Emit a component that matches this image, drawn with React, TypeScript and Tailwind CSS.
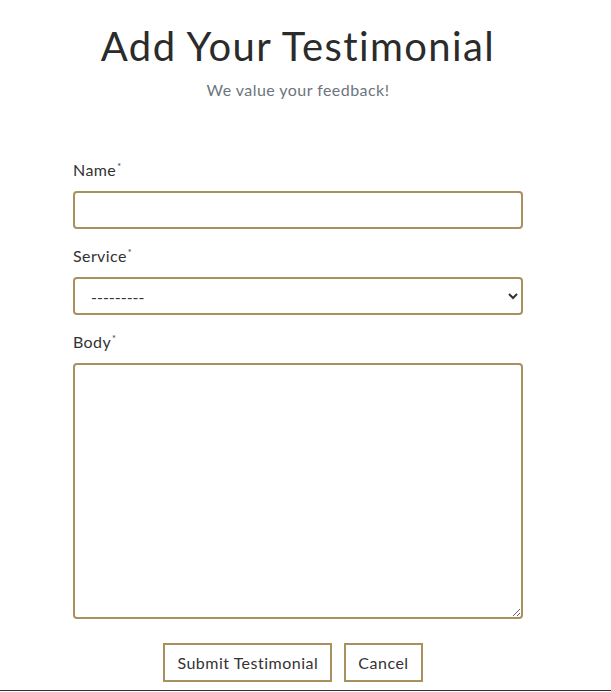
import React from 'react';

const Label = ({ text }: { text: string }) => (
  <label className="block text-[16px] leading-[24px] text-[#333] tracking-[0.4px]">
    {text}
    <span className="inline-block text-[9px] leading-[9px] relative top-[-6px] ml-[1px]">*</span>
  </label>
);

export default function App() {
  return (
    <div className="w-[611px] bg-white" style={{ fontFamily: 'Lato, "Open Sans", sans-serif' }}>
      <div className="w-[596px] pt-[22px]">
        <h1 className="text-center text-[40px] leading-[48px] font-normal text-[#2b2b2b] tracking-[1.4px]">
          Add Your Testimonial
        </h1>
        <p className="text-center text-[16px] leading-[24px] text-[#6c757d] mt-[8px] tracking-[0.45px]">We value your feedback!</p>

        <form className="w-[450px] mx-auto mt-[56px]" onSubmit={e => e.preventDefault()}>
          <div className="mb-[15px]">
            <Label text="Name" />
            <input type="text" className="mt-[9px] block w-full h-[38px] border-2 border-[#a8915f] rounded-[4px] px-3 outline-none" />
          </div>
          <div className="mb-[15px]">
            <Label text="Service" />
            <select className="mt-[9px] block w-full h-[38px] border-2 border-[#a8915f] rounded-[4px] px-3 text-[16px] text-[#333] bg-white outline-none">
              <option>---------</option>
            </select>
          </div>
          <div>
            <Label text="Body" />
            <textarea className="mt-[9px] block w-full h-[256px] border-2 border-[#a8915f] rounded-[4px] px-3 py-2 outline-none" />
          </div>
          <div className="flex justify-center gap-[12px] mt-[24px] pb-[8px] pr-[10px]">
            <button type="submit" className="h-[39px] px-[12px] border-2 border-[#a8915f] text-[16px] text-[#333] bg-white tracking-[0.5px]">
              Submit Testimonial
            </button>
            <button type="button" className="h-[39px] px-[12px] border-2 border-[#a8915f] text-[16px] text-[#333] bg-white tracking-[0.5px]">
              Cancel
            </button>
          </div>
        </form>
      </div>
      <div className="border-t border-[#333] h-[20px]" />
    </div>
  );
}
